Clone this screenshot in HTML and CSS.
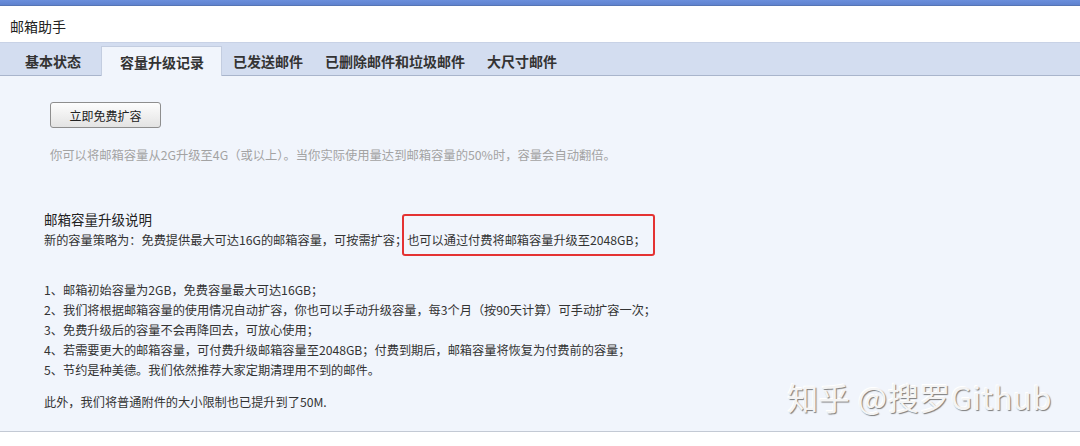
FILE: index.html
```html
<!DOCTYPE html>
<html lang="zh-CN">
<head>
    <meta charset="UTF-8">
    <meta name="viewport" content="width=device-width, initial-scale=1.0">
    <title>邮箱助手</title>
    <link rel="stylesheet" href="styles.css">
</head>
<body>

    <!-- Top strip -->
    <div class="top-strip"></div>

    <!-- Header -->
    <div class="header">邮箱助手</div>

    <!-- Tabs -->
    <div class="tabs">
        <a href="#" class="tab">基本状态</a>
        <a href="#" class="tab active">容量升级记录</a>
        <a href="#" class="tab">已发送邮件</a>
        <a href="#" class="tab">已删除邮件和垃圾邮件</a>
        <a href="#" class="tab">大尺寸邮件</a>
    </div>

    <!-- Content -->
    <div class="content">
        <div class="upgrade">
            <button class="btn">立即免费扩容</button>
            <p class="hint">你可以将邮箱容量从2G升级至4G（或以上）。当你实际使用量达到邮箱容量的50%时，容量会自动翻倍。</p>
        </div>

        <div class="notes">
            <h3>邮箱容量升级说明</h3>
            <p>新的容量策略为：免费提供最大可达16G的邮箱容量，可按需扩容；<span class="marked">也可以通过付费将邮箱容量升级至2048GB；</span></p>

            <ul class="rules">
                <li>1、邮箱初始容量为2GB，免费容量最大可达16GB；</li>
                <li>2、我们将根据邮箱容量的使用情况自动扩容，你也可以手动升级容量，每3个月（按90天计算）可手动扩容一次；</li>
                <li>3、免费升级后的容量不会再降回去，可放心使用；</li>
                <li>4、若需要更大的邮箱容量，可付费升级邮箱容量至2048GB；付费到期后，邮箱容量将恢复为付费前的容量；</li>
                <li>5、节约是种美德。我们依然推荐大家定期清理用不到的邮件。</li>
            </ul>

            <p class="extra">此外，我们将普通附件的大小限制也已提升到了50M.</p>
        </div>

        <div class="watermark">知乎 @搜罗Github</div>
    </div>

</body>
</html>
```

FILE: styles.css
```css
    body {
        margin: 0;
        font-family: 'Noto Sans CJK SC', 'Noto Sans', sans-serif;
        color: #333;
        background-color: #fff;
        overflow: hidden;
    }

    /* Top strip */
    .top-strip {
        height: 5px;
        background: linear-gradient(#6b8fdc, #5f82cf);
        border-bottom: 1px solid #5675b4;
    }

    /* Header */
    .header {
        height: 36px;
        line-height: 40px;
        padding-left: 10px;
        font-size: 14px;
        color: #222;
        background-color: #fff;
    }

    /* Tabs */
    .tabs {
        display: flex;
        align-items: flex-end;
        height: 32px;
        padding-left: 14px;
        background-color: #d3ddf0;
        border-top: 1px solid #c8d2e6;
        border-bottom: 1px solid #a9b5cc;
    }

    .tab {
        display: block;
        height: 28px;
        line-height: 28px;
        padding: 0 11px;
        font-size: 14px;
        font-weight: bold;
        color: #333;
        text-decoration: none;
    }

    .tab.active {
        margin-left: 9px;
        padding: 0 17px 0 18px;
        height: 29px;
        margin-bottom: -1px;
        background-color: #f1f5fc;
        border: 1px solid #c3cde0;
        border-bottom: none;
        line-height: 30px;
    }

    /* Content */
    .content {
        position: relative;
        height: 355px;
        background-color: #f1f5fc;
        border-bottom: 1px solid #c3c9d4;
        font-size: 12.2px;
        line-height: 20px;
    }

    .upgrade {
        padding: 26px 0 0 50px;
    }

    .btn {
        display: block;
        width: 111px;
        height: 26px;
        padding: 0;
        font-family: inherit;
        font-size: 12px;
        color: #222;
        background: linear-gradient(#fdfdfd, #e3e3e3);
        border: 1px solid #8e8e8e;
        border-radius: 3px;
        cursor: pointer;
    }

    .hint {
        margin: 17px 0 0;
        font-size: 12.3px;
        color: #a3a3a3;
    }

    .notes {
        padding: 44px 0 0 44px;
    }

    .notes h3 {
        margin: 0;
        font-size: 13.5px;
        font-weight: normal;
        line-height: 21px;
        color: #222;
    }

    .notes p {
        margin: 0;
    }

    .marked {
        position: relative;
        display: inline-block;
    }

    /* red annotation box */
    .marked::after {
        content: '';
        position: absolute;
        top: -16px;
        bottom: -6px;
        left: -5px;
        right: -9px;
        border: 2px solid #e43232;
        border-radius: 3px;
    }

    .rules {
        list-style: none;
        margin: 30px 0 0;
        padding: 0;
    }

    .notes .extra {
        margin-top: 12px;
    }

    .watermark {
        position: absolute;
        right: 28px;
        bottom: 16px;
        font-size: 31px;
        line-height: 36px;
        color: #f4f4f4;
        text-shadow: 1px 1px 1px #7d7d7d, -1px -1px 0 #fff;
        letter-spacing: 0.5px;
    }
```
